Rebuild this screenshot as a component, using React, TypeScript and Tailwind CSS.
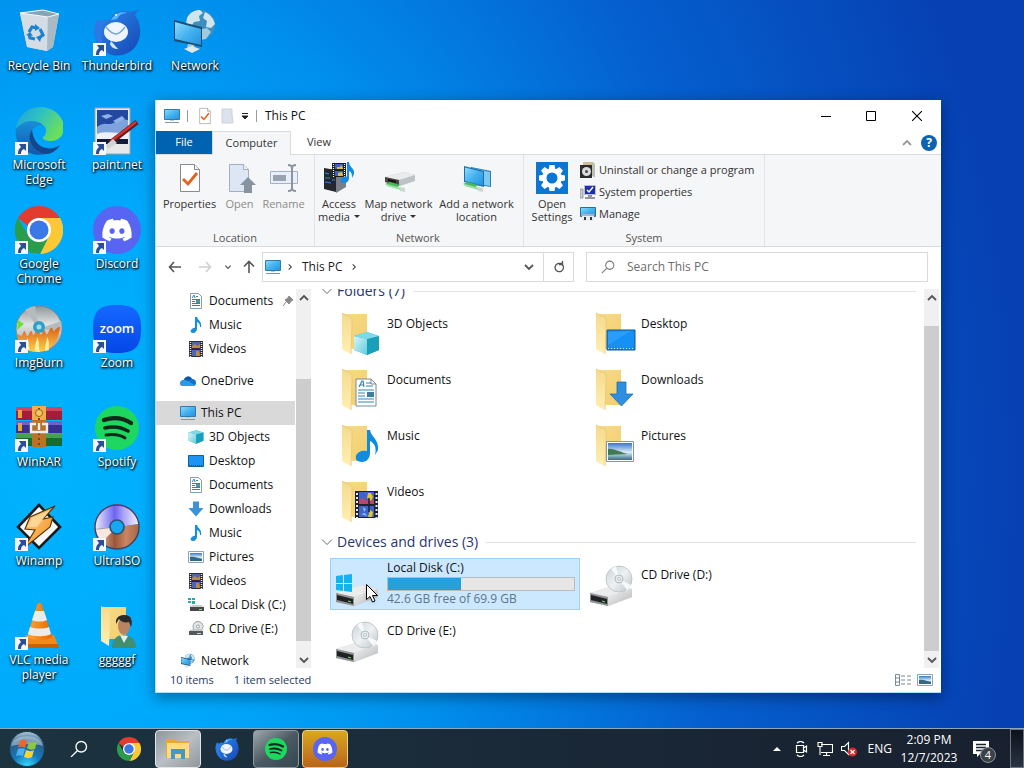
import React from 'react';
import { FaDiscord } from 'react-icons/fa6';

type IconProps = { className?: string };
type IconType = React.FC<IconProps>;

/* Gradients shared by all icons */
const Gradients = () => (
  <svg className="absolute w-0 h-0" aria-hidden="true">
    <defs>
      <linearGradient id="screen" x1="0" y1="0" x2="1" y2="1">
        <stop offset="0" stopColor="#8fdcfb" />
        <stop offset="0.5" stopColor="#45b2f0" />
        <stop offset="1" stopColor="#2292e0" />
      </linearGradient>
      <linearGradient id="folder" x1="0" y1="0" x2="1" y2="1">
        <stop offset="0" stopColor="#f7dc8a" />
        <stop offset="1" stopColor="#f3cd6c" />
      </linearGradient>
      <linearGradient id="folderFront" x1="0" y1="0" x2="0" y2="1">
        <stop offset="0" stopColor="#f6da8c" />
        <stop offset="1" stopColor="#ffefb4" />
      </linearGradient>
      <linearGradient id="metal" x1="0" y1="0" x2="1" y2="1">
        <stop offset="0" stopColor="#f5f5f5" />
        <stop offset="1" stopColor="#b4b6b8" />
      </linearGradient>
      <linearGradient id="silverDisc" x1="0" y1="0" x2="1" y2="1">
        <stop offset="0" stopColor="#c9d2d6" />
        <stop offset="0.5" stopColor="#eef1f2" />
        <stop offset="1" stopColor="#b8c3c8" />
      </linearGradient>
      <linearGradient id="burnDisc" x1="0" y1="0" x2="0" y2="1">
        <stop offset="0" stopColor="#8f9599" />
        <stop offset="0.4" stopColor="#dfe2e4" />
        <stop offset="1" stopColor="#8f9599" />
      </linearGradient>
      <linearGradient id="edgeGreen" x1="0" y1="0" x2="1" y2="0.5">
        <stop offset="0" stopColor="#1c9fdc" />
        <stop offset="0.5" stopColor="#2fc2c0" />
        <stop offset="1" stopColor="#6cdf5a" />
      </linearGradient>
      <linearGradient id="edgeBlue" x1="0" y1="0" x2="0" y2="1">
        <stop offset="0" stopColor="#1a8fd8" />
        <stop offset="1" stopColor="#1159a8" />
      </linearGradient>
      <linearGradient id="bird" x1="0" y1="0" x2="1" y2="1">
        <stop offset="0" stopColor="#2a8df0" />
        <stop offset="1" stopColor="#1546b4" />
      </linearGradient>
      <linearGradient id="sky" x1="0" y1="0" x2="0" y2="1">
        <stop offset="0" stopColor="#3a78c4" />
        <stop offset="0.55" stopColor="#dcecf6" />
        <stop offset="1" stopColor="#2d6d8f" />
      </linearGradient>
      <linearGradient id="flame" x1="0" y1="0" x2="0" y2="1">
        <stop offset="0" stopColor="#d9601a" />
        <stop offset="1" stopColor="#ffd24a" />
      </linearGradient>
      <linearGradient id="cone" x1="0" y1="0" x2="1" y2="0">
        <stop offset="0" stopColor="#ffa63c" />
        <stop offset="1" stopColor="#e06a00" />
      </linearGradient>
      <linearGradient id="bolt" x1="0" y1="0" x2="1" y2="1">
        <stop offset="0" stopColor="#ffd48a" />
        <stop offset="1" stopColor="#f08a1c" />
      </linearGradient>
      <linearGradient id="cubeLeft" x1="0" y1="0" x2="1" y2="1">
        <stop offset="0" stopColor="#d9f5f9" />
        <stop offset="1" stopColor="#5fcbdc" />
      </linearGradient>
      <radialGradient id="orb" cx="0.5" cy="1" r="1">
        <stop offset="0" stopColor="#37e0ff" />
        <stop offset="0.4" stopColor="#1479bd" />
        <stop offset="0.75" stopColor="#2b5d86" />
        <stop offset="1" stopColor="#b8d3e4" />
      </radialGradient>
      <linearGradient id="zoomBg" x1="0" y1="0" x2="0" y2="1">
        <stop offset="0" stopColor="#1568ff" />
        <stop offset="1" stopColor="#0547e8" />
      </linearGradient>
      <linearGradient id="isoTop" x1="0" y1="0" x2="1" y2="0">
        <stop offset="0" stopColor="#f0f0fb" />
        <stop offset="0.45" stopColor="#6d63f2" />
        <stop offset="0.65" stopColor="#a9a4f7" />
        <stop offset="1" stopColor="#f4f4fd" />
      </linearGradient>
      <linearGradient id="isoBottom" x1="0" y1="0" x2="1" y2="0">
        <stop offset="0" stopColor="#eccab4" />
        <stop offset="0.45" stopColor="#9a5636" />
        <stop offset="0.7" stopColor="#c98663" />
        <stop offset="1" stopColor="#a76544" />
      </linearGradient>
    </defs>
  </svg>
);

/* Desktop icons, all on a 48 unit canvas */
const Shortcut = () => (
  <g>
    <rect x="0" y="35" width="13" height="13" fill="#f4f7fb" />
    <path d="M4 37h7v7l-2-2c-2 1-3 2-3 5H3c0-4 1-5 3-7z" fill="#2a4f96" />
  </g>
);

const RecycleBin: IconType = ({ className }) => (
  <svg viewBox="0 0 48 48" className={className}>
    <path d="M5 5l7 34 20 4 6-4 6-33-16-4z" fill="#c8d6de" />
    <path d="M5 5l7 34 20 4 1-36z" fill="#d3dde3" />
    <path d="M33 7l11-1-6 33-6 4z" fill="#a9bac4" />
    <path d="M5 5l23-3 16 4-11 3z" fill="#8ba2b0" stroke="#f2f7f9" strokeWidth="1" />
    <g fill="none" stroke="#1d82d2" strokeWidth="3.2">
      <path d="M14 24l3-5 5 1" />
      <path d="M25 21l3 6-4 3" />
      <path d="M20 31l-5-1-1-4" />
    </g>
    <path d="M20 16l5 4-5 3zM27 27l-6 2 4 5zM11 27l4-3 3 4z" fill="#1d82d2" />
  </svg>
);

const BirdArt = () => (
  <g>
    <path d="M17 12C20 3 31 1 37 4l8-2-3 5c6 8 7 20 2 29-5 9-15 13-25 11C8 44 1 33 1 22c0-5 1-9 4-12l1 6c2-4 6-6 11-4z" fill="url(#bird)" />
    <path d="M5 12C-1 24 3 38 15 45 7 35 7 26 11 15z" fill="#2f79e2" />
    <path d="M18 12c4-7 11-9 17-7-6 0-9 2-11 6z" fill="#5ab6ff" />
    <ellipse cx="23" cy="24" rx="12" ry="10" fill="#eef5fc" />
    <path d="M13 19c4 5 7 7 10 7s6-3 9-7" fill="none" stroke="#7aa6d4" strokeWidth="1.4" />
    <path d="M18 33l7 8c-4 0-7-2-8-5z" fill="#d4e6f8" />
    <circle cx="23" cy="7" r="1" fill="#fff" />
  </g>
);

const Thunderbird: IconType = ({ className }) => (
  <svg viewBox="0 0 48 48" className={className}><BirdArt /><Shortcut /></svg>
);

const ThunderbirdSmall: IconType = ({ className }) => (
  <svg viewBox="0 0 48 48" className={className}><BirdArt /></svg>
);

const NetworkIcon: IconType = ({ className }) => (
  <svg viewBox="0 0 48 48" className={className}>
    <circle cx="29" cy="17" r="15" fill="#3c8fc0" />
    <path d="M16 10c3-6 8-8 13-8l3 3-4 3 1 5-6 1-3 5-5-2zM34 4c5 2 9 7 10 12l-4 4-5-1 1-6-4-3z" fill="#cfe6ee" />
    <path d="M28 22l8-2 4 4-5 7-6 1z" fill="#9fcbdc" />
    <path d="M3 12l28 7v20L3 33z" fill="#1c4d74" />
    <path d="M4 14l26 7v16L4 31z" fill="url(#screen)" />
    <path d="M17 36l6 1 1 4-8-1z" fill="#b7c4cc" />
    <path d="M13 41l8-3 8 3-8 4z" fill="#dfe7eb" />
  </svg>
);

const Edge: IconType = ({ className }) => (
  <svg viewBox="0 0 48 48" className={className}>
    <path d="M1 22C6 13 20 11 28 18c-8-1-14 6-12 14 2 9 11 14 19 14C18 52-2 42 1 22z" fill="url(#edgeBlue)" />
    <path d="M1 22C3 9 12 0 25 0c14 0 24 10 24 21 0 8-6 13-13 13-6 0-9-2-8-4 4-3 4-8 1-11C23 12 8 12 1 22z" fill="url(#edgeGreen)" />
    <path d="M17 23c-6 8 0 22 15 24 6-1 10-4 13-9-4 3-9 4-14 3-8-1-13-9-14-18z" fill="#15468c" />
    <Shortcut />
  </svg>
);

const PaintNet: IconType = ({ className }) => (
  <svg viewBox="0 0 48 48" className={className}>
    <path d="M2 1h35v46H2z" fill="#e6e8ea" stroke="#9aa4ac" strokeWidth="1" />
    <path d="M4 3h31v34H4z" fill="#2248a0" />
    <path d="M4 20c8-7 12 0 18-5s9-2 13-2v16H4z" fill="#7ea3dc" />
    <path d="M4 27c10-4 20 1 31-3v8H4z" fill="#eaf1fb" />
    <path d="M8 9l7-2 5 2-7 3zM20 14l9-5 3 3-8 4z" fill="#90b0e8" />
    <path d="M4 32h31v5H4z" fill="#121b38" />
    <path d="M44 15L17 36" stroke="#651b1e" strokeWidth="5" />
    <path d="M43 15L18 34" stroke="#d33434" strokeWidth="2.4" />
    <path d="M20 32l4 4-9 6-2-4z" fill="#cfd3d7" />
    <Shortcut />
  </svg>
);

const ChromeArt = () => (
  <g>
    <path d="M24 0a24 24 0 0 1 21 12H24A12 12 0 0 0 13 20L3 12A24 24 0 0 1 24 0z" fill="#e33b2e" />
    <path d="M3 12l11 19c2 4 6 5 10 5l-5 11.500A24 24 0 0 1 3 12z" fill="#2a9c4a" />
    <path d="M24 12h21a24 24 0 0 1-20 36l9-18z" fill="#fcc934" />
    <path d="M20 34l12 0-7 14-6-1z" fill="#2a9c4a" />
    <circle cx="24" cy="24" r="12" fill="#fff" />
    <circle cx="24" cy="24" r="9.500" fill="#3b78e7" />
  </g>
);

const Chrome: IconType = ({ className }) => (
  <svg viewBox="0 0 48 48" className={className}><ChromeArt /><Shortcut /></svg>
);

const ChromeSmall: IconType = ({ className }) => (
  <svg viewBox="0 0 48 48" className={className}><ChromeArt /></svg>
);

const DiscordArt = () => (
  <g>
    <circle cx="24" cy="24" r="24" fill="#5865f2" />
    <FaDiscord x="8" y="8" size={32} color="#fff" />
  </g>
);

const Discord: IconType = ({ className }) => (
  <svg viewBox="0 0 48 48" className={className}><DiscordArt /><Shortcut /></svg>
);

const DiscordSmall: IconType = ({ className }) => (
  <svg viewBox="0 0 48 48" className={className}><DiscordArt /></svg>
);

const ImgBurn: IconType = ({ className }) => (
  <svg viewBox="0 0 48 48" className={className}>
    <circle cx="24" cy="24" r="23" fill="url(#burnDisc)" stroke="#80878c" strokeWidth="1" />
    <path d="M24 24L10 5a23 23 0 0 1 10-4zM24 24l22-8c1 4 1 7 0 10z" fill="#b5babd" />
    <path d="M3 15l6 4-7 6z" fill="#6be03a" />
    <path d="M2 30c3-2 3 3 5 0s2-7 4-1 3-2 5-3 1 8 4 2 3-3 5 1 3-8 5-3 2 4 4 0 3-4 4-1 3-3 7-3c-1 14-9 24-21 25C12 48 3 40 2 30z" fill="url(#flame)" />
    <path d="M10 44c0-6 2-6 2-11 3 4 1 8 3 12zM20 46c-1-7 2-8 2-14 3 6 1 9 3 15zM30 46c0-7 2-9 2-14 3 5 1 9 2 13z" fill="#fff0a0" />
    <circle cx="24" cy="22" r="6" fill="#2f9fc4" />
    <circle cx="24" cy="22" r="2.500" fill="#9fdcee" />
    <Shortcut />
  </svg>
);

const Zoom: IconType = ({ className }) => (
  <svg viewBox="0 0 48 48" className={className}>
    <path d="M24 0c18 0 24 6 24 24s-6 24-24 24S0 42 0 24 6 0 24 0z" fill="url(#zoomBg)" />
    <text x="24" y="28" textAnchor="middle" fontSize="13" fontWeight="600" fill="#fff" fontFamily="Open Sans, sans-serif">zoom</text>
    <Shortcut />
  </svg>
);

const WinRAR: IconType = ({ className }) => (
  <svg viewBox="0 0 48 48" className={className}>
    <path d="M1 3h46v13H1z" fill="#a51c38" />
    <path d="M1 3h46v4H1z" fill="#cf4661" />
    <path d="M1 17h46v12H1z" fill="#3a2f8c" />
    <path d="M1 17h46v4H1z" fill="#6c62c8" />
    <path d="M1 30h46v12H1z" fill="#1d6b2c" />
    <path d="M1 30h46v4H1z" fill="#45a050" />
    <path d="M3 6h4v8H3zM3 19h4v8H3z" fill="#e8a53a" />
    <path d="M17 2h14v41H17z" fill="#b9722a" />
    <path d="M17 2h14v14H17z" fill="#efae4c" />
    <path d="M24 4v38" stroke="#7d4512" strokeWidth="2" strokeDasharray="2 3" />
    <circle cx="24" cy="9" r="3.500" fill="#f6c768" stroke="#98601c" strokeWidth="1" />
    <path d="M21 20h-5v8h16v-8h-5M24 19v7" fill="none" stroke="#eceff1" strokeWidth="2.400" />
    <Shortcut />
  </svg>
);

const SpotifyArt = () => (
  <g>
    <circle cx="24" cy="24" r="22" fill="#1ed760" />
    <g fill="none" stroke="#10281a" strokeLinecap="round">
      <path d="M11 16c9-3 19-2 27 3" strokeWidth="4.400" />
      <path d="M12 24c8-2 16-1 23 3" strokeWidth="3.600" />
      <path d="M13 31c7-1 13-1 19 3" strokeWidth="3" />
    </g>
  </g>
);

const Spotify: IconType = ({ className }) => (
  <svg viewBox="0 0 48 48" className={className}><SpotifyArt /><Shortcut /></svg>
);

const SpotifySmall: IconType = ({ className }) => (
  <svg viewBox="0 0 48 48" className={className}><SpotifyArt /></svg>
);

const Winamp: IconType = ({ className }) => (
  <svg viewBox="0 0 48 48" className={className}>
    <path d="M24 2l21 22-21 21L3 24z" fill="#f7f7f7" stroke="#1a1a1a" strokeWidth="2.600" />
    <path d="M40 3L15 14 10 26l10 1L9 45l26-21 3-10-10 2z" fill="url(#bolt)" stroke="#5a3608" strokeWidth="1.200" />
    <path d="M35 7L17 15l-4 9h9z" fill="#ffe2ae" opacity="0.700" />
    <Shortcut />
  </svg>
);

const UltraISO: IconType = ({ className }) => (
  <svg viewBox="0 0 48 48" className={className}>
    <path d="M2 26A22 22 0 1 1 46 21L24 24z" fill="url(#isoTop)" />
    <path d="M46 21A22 22 0 1 1 2 26l22-2z" fill="url(#isoBottom)" />
    <path d="M24 24L3 27a22 22 0 0 0 6 12z" fill="#f6e8de" />
    <circle cx="24" cy="24" r="22" fill="none" stroke="#4b3d5c" strokeWidth="1.400" />
    <circle cx="24" cy="24" r="7" fill="#14a8f5" stroke="#32506e" strokeWidth="1.600" />
    <Shortcut />
  </svg>
);

const Vlc: IconType = ({ className }) => (
  <svg viewBox="0 0 48 48" className={className}>
    <path d="M11 33h28l5 13H4z" fill="#f28a1a" />
    <path d="M4 46l2-4h37l1 4z" fill="#c96204" />
    <path d="M22 3c1-3 4-3 5 0l10 32c-5 4-20 4-25 0z" fill="url(#cone)" />
    <path d="M20 9h9l3 9c-4 2-11 2-15 0z" fill="#e9ebec" />
    <path d="M15 25c5 2 14 2 19 0l2 7c-5 3-18 3-23 0z" fill="#e9ebec" />
    <Shortcut />
  </svg>
);

const FolderArt = () => (
  <g>
    <path d="M9 5h24v35l-14 0-10-4z" fill="url(#folder)" />
    <path d="M8 4l10 5v9l-1 27-8-4c-1-1-1-1-1-3z" fill="url(#folderFront)" />
    <path d="M8 4l10 5v9l-1 27" fill="none" stroke="#e9c66c" strokeWidth="0.800" />
  </g>
);

const UserFolder: IconType = ({ className }) => (
  <svg viewBox="0 0 48 48" className={className}>
    <path d="M9 5h24v32H9z" fill="url(#folder)" />
    <path d="M8 4l9 5v9l-1 26-8-5z" fill="url(#folderFront)" />
    <path d="M19 46c0-9 5-13 11-13s13 3 13 13z" fill="#3f8f70" />
    <path d="M27 33l4 8 4-7z" fill="#e3efe8" />
    <ellipse cx="31" cy="24" rx="6" ry="9" fill="#b98460" />
    <path d="M23 22c-1-8 5-9 9-9 6 0 8 5 6 12l-2-5c-4 1-8 0-10-3z" fill="#2c2b2a" />
  </svg>
);

/* Folder overlays */
const CubeArt = () => (
  <g>
    <path d="M20 27l13-4 12 4v14l-12 5-13-5z" fill="#2fb4cd" />
    <path d="M20 27l13 3v16l-13-5z" fill="url(#cubeLeft)" />
    <path d="M33 30l12-3v14l-12 5z" fill="#1a9fbb" />
    <path d="M20 27l13-4 12 4-12 3z" fill="#7ddbe8" />
  </g>
);

const DocArt = () => (
  <g>
    <path d="M22 14h15l5 5v22H22z" fill="#fff" stroke="#7b8a94" strokeWidth="1" />
    <path d="M37 14v5h5" fill="none" stroke="#7b8a94" strokeWidth="1" />
    <path d="M25 22l3-6h1l1 6M26 20h4M32 18h5M32 21h7M24 25h16M24 28h7M24 31h7M24 34h16M24 37h16" fill="none" stroke="#2b87b8" strokeWidth="1.200" />
    <path d="M33 27h7v5h-7z" fill="#3e7d9d" />
  </g>
);

const NoteArt = () => (
  <path d="M33 9h3c1 7 9 9 8 20l-3 5c2-8-1-12-5-14v12c0 6-4 9-8 9-5 0-7-3-6-6 1-4 6-6 11-5z" fill="#0f8ce0" />
);

const FilmArt = () => (
  <g>
    <path d="M21 14h23v27H21z" fill="#1d2230" />
    <path d="M23 16v25M42.500 16v25" stroke="#e4e8ee" strokeWidth="2" strokeDasharray="2 2" />
    <path d="M25 15h15v12H25zM25 29h15v11H25z" fill="#3f63c8" />
    <path d="M25 23l4-2 4 3 3-3 4 3v3H25z" fill="#b8486a" />
    <path d="M34 16h3l2 4-2 4-4-3zM36 33l3 2-1 5h-4z" fill="#e5c62a" />
    <path d="M29 30l3 2-2 3zM27 37l4-1 2 3z" fill="#83c4f0" />
    <path d="M35 21v14" stroke="#1d2230" strokeWidth="1.500" />
  </g>
);

const ScreenArt = () => (
  <g>
    <path d="M19 21h28v20H19z" fill="#1590f5" stroke="#12578c" strokeWidth="1" />
    <path d="M20 23l23-1-23 14z" fill="#2a9dfb" />
    <path d="M20 39.500h26" stroke="#d7ecfc" strokeWidth="1" strokeDasharray="1 2" />
  </g>
);

const ArrowArt = () => (
  <path d="M29 17h9v12h7L33.500 41 22 29h7z" fill="#2e8fe0" stroke="#1f6fb5" strokeWidth="0.800" />
);

const PhotoArt = () => (
  <g>
    <path d="M18.500 20.500h27v20h-27z" fill="#fff" stroke="#7d97a8" strokeWidth="1" />
    <path d="M20 22h24v17H20z" fill="url(#sky)" />
    <path d="M20 28c6-1 13 4 20 5l-20 1z" fill="#3f7a52" />
  </g>
);

const withFolder = (Art: React.FC): IconType => ({ className }) => (
  <svg viewBox="0 0 48 48" className={className}><FolderArt /><Art /></svg>
);

const DriveArt = () => (
  <g>
    <path d="M2 33l26-8 16 4v8L20 46 2 42z" fill="#c9cbcd" />
    <path d="M2 33l26-8 16 4-24 8z" fill="#ececec" />
    <path d="M20 37l24-8v8L20 46z" fill="url(#metal)" />
    <path d="M2 33l18 4v9L2 42z" fill="#8f9294" />
    <path d="M3 35l16 4v5L3 40z" fill="#1f2122" />
    <path d="M14 41l3 1" stroke="#7fe070" strokeWidth="1" />
  </g>
);

const LocalDisk: IconType = ({ className }) => (
  <svg viewBox="0 0 48 48" className={className}>
    <DriveArt />
    <path d="M2 16l7-1v8H2zM10 15l8-1v9h-8zM2 24h7v7l-7-1zM10 24h8v8l-8-1z" fill="#12b5ee" />
  </svg>
);

const CdDrive: IconType = ({ className }) => (
  <svg viewBox="0 0 48 48" className={className}>
    <DriveArt />
    <circle cx="31" cy="19" r="13" fill="url(#silverDisc)" stroke="#b5bfc3" strokeWidth="0.800" />
    <path d="M31 19l8 11 4-5zM31 19L23 9l5-3z" fill="#f7f9fa" />
    <circle cx="31" cy="19" r="4" fill="#e8eef0" stroke="#a3b0b5" strokeWidth="0.800" />
    <circle cx="31" cy="19" r="1.500" fill="#fff" stroke="#a3b0b5" strokeWidth="0.800" />
  </svg>
);

/* 16px icons */
const PcSmall: IconType = ({ className }) => (
  <svg viewBox="0 0 16 16" className={className}>
    <path d="M0.500 1.500h15v10h-15z" fill="url(#screen)" stroke="#2f7cab" strokeWidth="1" />
    <path d="M1 14.500h14" stroke="#7e96a5" strokeWidth="1" />
    <path d="M6 12h4v1H6z" fill="#b9cbd6" />
  </svg>
);

const SheetSmall: IconType = ({ className }) => (
  <svg viewBox="0 0 16 16" className={className}>
    <path d="M2.500 0.500h8l3 3v12h-11z" fill="#fff" stroke="#8d9ba4" strokeWidth="1" />
    <path d="M4 5l2-3 1 3M8 3.500h2M4 6.500h8M4 8.500h3M8 9.500h4M4 10.500h8M4 12.500h8" fill="none" stroke="#2b87a8" strokeWidth="1" />
    <path d="M8 7h4v3H8z" fill="#4c8fae" />
  </svg>
);

const NoteSmall: IconType = ({ className }) => (
  <svg viewBox="0 0 16 16" className={className}>
    <path d="M7 0h2c1 4 5 4 4 10h-1c0-3-1-4-3-5v7c0 2-2 4-4 4s-3-2-2-3 3-3 4-2z" fill="#168ee0" />
  </svg>
);

const FilmSmall: IconType = ({ className }) => (
  <svg viewBox="0 0 16 16" className={className}>
    <path d="M1 0h14v16H1z" fill="#2b2d34" />
    <path d="M2.500 1v15M13.500 1v15" stroke="#e2e4e8" strokeWidth="1.500" strokeDasharray="1 1" />
    <path d="M4 1h8v6H4zM4 9h8v6H4z" fill="#4a66b8" />
    <path d="M4 5l3-2 2 2 3-2v4H4zM8 10h3l1 5H8z" fill="#c08a3a" />
  </svg>
);

const CloudSmall: IconType = ({ className }) => (
  <svg viewBox="0 0 16 16" className={className}>
    <path d="M4 7c1-4 6-5 8-1 3 0 4 2 4 4s-1 3-3 3H3c-4 0-4-6 1-6z" fill="#1373c8" />
    <path d="M4 7c3-1 5 1 7 3l4 2c-1 1-1 1-2 1H3c-4 0-4-5 1-6z" fill="#2b9be8" />
    <path d="M4 7c1-4 6-5 8-1-2 0-3 1-4 2-1-1-3-1-4-1z" fill="#0b5aa8" />
  </svg>
);

const CubeSmall: IconType = ({ className }) => (
  <svg viewBox="19 22 27 25" className={className}><CubeArt /></svg>
);

const DesktopSmall: IconType = ({ className }) => (
  <svg viewBox="0 0 16 16" className={className}>
    <path d="M0.500 2.500h15v11h-15z" fill="#1b94f5" stroke="#14609c" strokeWidth="1" />
    <path d="M1 12.500h14" stroke="#1e4e78" strokeWidth="1" strokeDasharray="1 1" />
  </svg>
);

const DownSmall: IconType = ({ className }) => (
  <svg viewBox="0 0 16 16" className={className}>
    <path d="M5 0.500h6V7h4.500L8 15.500 0.500 7H5z" fill="#3a92d8" />
  </svg>
);

const PhotoSmall: IconType = ({ className }) => (
  <svg viewBox="0 0 16 16" className={className}>
    <path d="M0.500 2.500h15v11h-15z" fill="#fff" stroke="#8fa5b3" strokeWidth="1" />
    <path d="M2 4h12v8H2z" fill="url(#sky)" />
    <path d="M2 8c4-1 7 1 12 2v2H2z" fill="#2f6a86" />
  </svg>
);

const DiskSmall: IconType = ({ className }) => (
  <svg viewBox="0 0 16 16" className={className}>
    <path d="M2 9l3-1h8l3 2H2z" fill="#c9cdcf" />
    <path d="M2 10h14v4H2z" fill="#45494c" />
    <path d="M11 12h3v1h-3z" fill="#8fe080" />
    <path d="M0 1h3v2H0zM4 1h3v2H4zM0 4h3v2H0zM4 4h3v3H4z" fill="#1cb0a8" />
  </svg>
);

const CdSmall: IconType = ({ className }) => (
  <svg viewBox="0 0 16 16" className={className}>
    <circle cx="10" cy="5.500" r="5" fill="#e3e6e8" stroke="#989ea2" strokeWidth="1" />
    <circle cx="10" cy="5.500" r="1.500" fill="#fff" stroke="#989ea2" strokeWidth="1" />
    <path d="M2 9l3-1h8l2 2H2z" fill="#c4c8ca" />
    <path d="M1 10h14v4H1z" fill="#55595c" />
    <path d="M9 12h4v1H9z" fill="#d6d6d6" />
  </svg>
);

/* Ribbon icons */
const CheckSheet: IconType = ({ className }) => (
  <svg viewBox="0 0 32 32" className={className}>
    <path d="M6.500 2.500h14l5 5v22h-19z" fill="#fff" stroke="#8a8a8a" strokeWidth="1" />
    <path d="M20.500 2.500v5h5" fill="#eee" stroke="#8a8a8a" strokeWidth="1" />
    <path d="M9 17l5 5 9-11" fill="none" stroke="#e5601c" strokeWidth="2.800" />
  </svg>
);

const OpenSheet: IconType = ({ className }) => (
  <svg viewBox="0 0 32 32" className={className}>
    <path d="M5.500 2.500h14l5 5v22h-19z" fill="#dde6f4" stroke="#a3afbf" strokeWidth="1" />
    <path d="M19.500 2.500v5h5" fill="#eef2f9" stroke="#a3afbf" strokeWidth="1" />
    <path d="M24 15l8 8h-4v8h-8v-8h-4z" fill="#8893a2" />
  </svg>
);

const Rename: IconType = ({ className }) => (
  <svg viewBox="0 0 32 32" className={className}>
    <path d="M2.500 9.500h27v12h-27z" fill="#e9eff8" stroke="#a4b2c4" strokeWidth="1" />
    <path d="M5 13h13v6H5z" fill="#98a3b2" />
    <path d="M20 3c3 0 4 1 4 3 0-2 1-3 4-3M24 6v20M20 29c3 0 4-1 4-3 0 2 1 3 4 3" fill="none" stroke="#8b95a2" strokeWidth="2" />
  </svg>
);

const AccessMedia: IconType = ({ className }) => (
  <svg viewBox="0 0 32 32" className={className}>
    <path d="M1 6l12 2v22L1 27z" fill="#24272c" />
    <path d="M13 8l10-3v20l-10 6z" fill="#7b8088" />
    <path d="M2 11l4 1M2 16h5M2 20l6 1M9 14h3M9 18h3" stroke="#2f86e8" strokeWidth="1.200" />
    <path d="M9 1h14v14H9z" fill="#1c1c1c" />
    <path d="M10.500 2v13M21.500 2v13" stroke="#f2f2f2" strokeWidth="1.200" strokeDasharray="1 1" />
    <path d="M12 2h8v5h-8zM12 9h8v5h-8z" fill="#3d62c4" />
    <path d="M14 5h3l1-2 2 3v1h-6zM15 11l4-1 1 4h-5z" fill="#dcc233" />
    <path d="M24 0h2c0 5 6 6 5 12l-2 4c0-5-1-6-3-7v7c0 4-3 5-5 5-3 0-4-2-3-4s4-3 6-2z" fill="#138be2" />
  </svg>
);

const CableArt = () => (
  <g>
    <path d="M2 22l5-2 10 3-4 3z" fill="#49b85c" />
    <path d="M4 23l14 4" stroke="#8fe09a" strokeWidth="2" />
    <path d="M17 25l5 1v4l-5-1z" fill="#cfd4d6" />
  </g>
);

const MapDrive: IconType = ({ className }) => (
  <svg viewBox="0 0 32 32" className={className}>
    <path d="M2 15l19-5 11 3v6l-15 5-15-4z" fill="#bfc2c4" />
    <path d="M2 15l19-5 11 3-16 5z" fill="#eaebec" />
    <path d="M2 15l14 3v6L2 20z" fill="#4a4442" />
    <path d="M5 18l8 2" stroke="#17110f" strokeWidth="2" />
    <CableArt />
  </svg>
);

const AddLocation: IconType = ({ className }) => (
  <svg viewBox="0 0 32 32" className={className}>
    <path d="M10 5l20 4v16l-20-3z" fill="#2a7fb8" />
    <path d="M11 6l18 4v14l-18-3z" fill="#7fc8ef" />
    <path d="M3 4l20 5v16L3 20z" fill="#1d6fa8" />
    <path d="M4 5.500l18 4.500v13.500L4 19z" fill="url(#screen)" />
    <CableArt />
  </svg>
);

const gearTeeth = [0, 45, 90, 135, 180, 225, 270, 315];

const Settings: IconType = ({ className }) => (
  <svg viewBox="0 0 32 32" className={className}>
    <path d="M0 0h32v32H0z" fill="#0b76d4" />
    <circle cx="16" cy="16" r="7.500" fill="none" stroke="#fff" strokeWidth="4" />
    {gearTeeth.map(angle => (
      <path key={angle} d="M13.500 3h5l1 5h-7z" fill="#fff" transform={`rotate(${angle} 16 16)`} />
    ))}
    <circle cx="16" cy="16" r="5" fill="#0b76d4" />
  </svg>
);

const Uninstall: IconType = ({ className }) => (
  <svg viewBox="0 0 16 16" className={className}>
    <path d="M3 0h10l2 2v12H3z" fill="#cbbf9a" />
    <path d="M13 2h2v13h-2z" fill="#b8bcc4" />
    <path d="M0 3h12v13H0z" fill="#2c2c2c" />
    <circle cx="6.500" cy="9.500" r="4.500" fill="#d9dcde" />
    <circle cx="6.500" cy="9.500" r="1.500" fill="#4a4a4a" />
  </svg>
);

const SystemProps: IconType = ({ className }) => (
  <svg viewBox="0 0 16 16" className={className}>
    <path d="M0 5h3v9H0z" fill="#c9ccd0" stroke="#8c8f94" strokeWidth="0.800" />
    <path d="M4 1h12v10H4z" fill="#b9bec8" />
    <path d="M5 2h10v8H5z" fill="#1e2fa8" />
    <path d="M7 6l2 2 4-5" fill="none" stroke="#fff" strokeWidth="1.500" />
    <path d="M8 11h4v2H8zM5 13h10v2H5z" fill="#9196a0" />
  </svg>
);

const Manage: IconType = ({ className }) => (
  <svg viewBox="0 0 16 16" className={className}>
    <path d="M0.500 1.500h15v9h-15z" fill="url(#screen)" stroke="#2c6f96" strokeWidth="1" />
    <path d="M2 8h12v7H2z" fill="#e9edf0" />
    <path d="M2 8h12v2H2z" fill="#a9b6be" />
    <path d="M4 11h2v3H4zM10 11h2v3h-2z" fill="#33383c" />
  </svg>
);

/* Chevrons and arrows */
const Chevron: React.FC<{ dir: 'up' | 'down' | 'right'; thin?: boolean; className?: string }> = ({ dir, thin, className }) => {
  const paths = { up: 'M2 8l4-4 4 4', down: 'M2 4l4 4 4-4', right: 'M4 2l4 4-4 4' };
  const thinDown = 'M1 3.500l5 5 5-5';
  return (
    <svg viewBox="0 0 12 12" className={className}>
      <path d={thin ? thinDown : paths[dir]} fill="none" stroke="currentColor" strokeWidth={thin ? 1 : 1.8} />
    </svg>
  );
};

const LongArrow: React.FC<{ d: string; className?: string }> = ({ d, className }) => (
  <svg viewBox="0 0 14 14" className={className}>
    <path d={d} fill="none" stroke="currentColor" strokeWidth="1.600" />
  </svg>
);

const Magnifier: IconType = ({ className }) => (
  <svg viewBox="0 0 16 16" className={className}>
    <circle cx="10" cy="6" r="4.700" fill="none" stroke="currentColor" strokeWidth="1.200" />
    <path d="M6.500 9.500L1 15" stroke="currentColor" strokeWidth="1.200" />
  </svg>
);

const ThumbsView: IconType = ({ className }) => (
  <svg viewBox="0 0 16 12" className={className}>
    <path d="M0.500 0.500h4v11h-4zM0.500 4h4M0.500 8h4" fill="none" stroke="#7a8894" strokeWidth="1" />
    <path d="M6 2h4M12 2h4M6 6h4M12 6h4M6 10h4M12 10h4" stroke="#7a8894" strokeWidth="1" />
  </svg>
);

const desktopColumns: { name: string; icon: IconType }[][] = [
  [
    { name: 'Recycle Bin', icon: RecycleBin },
    { name: 'Microsoft Edge', icon: Edge },
    { name: 'Google Chrome', icon: Chrome },
    { name: 'ImgBurn', icon: ImgBurn },
    { name: 'WinRAR', icon: WinRAR },
    { name: 'Winamp', icon: Winamp },
    { name: 'VLC media player', icon: Vlc },
  ],
  [
    { name: 'Thunderbird', icon: Thunderbird },
    { name: 'paint.net', icon: PaintNet },
    { name: 'Discord', icon: Discord },
    { name: 'Zoom', icon: Zoom },
    { name: 'Spotify', icon: Spotify },
    { name: 'UltraISO', icon: UltraISO },
    { name: 'gggggf', icon: UserFolder },
  ],
  [{ name: 'Network', icon: NetworkIcon }],
];

const treeGroups: { name: string; icon: IconType; root?: boolean; active?: boolean; pinned?: boolean }[][] = [
  [
    { name: 'Documents', icon: SheetSmall, pinned: true },
    { name: 'Music', icon: NoteSmall },
    { name: 'Videos', icon: FilmSmall },
  ],
  [{ name: 'OneDrive', icon: CloudSmall, root: true }],
  [
    { name: 'This PC', icon: PcSmall, root: true, active: true },
    { name: '3D Objects', icon: CubeSmall },
    { name: 'Desktop', icon: DesktopSmall },
    { name: 'Documents', icon: SheetSmall },
    { name: 'Downloads', icon: DownSmall },
    { name: 'Music', icon: NoteSmall },
    { name: 'Pictures', icon: PhotoSmall },
    { name: 'Videos', icon: FilmSmall },
    { name: 'Local Disk (C:)', icon: DiskSmall },
    { name: 'CD Drive (E:)', icon: CdSmall },
  ],
  [{ name: 'Network', icon: NetworkIcon, root: true }],
];

const folders: { name: string; icon: IconType }[] = [
  { name: '3D Objects', icon: withFolder(CubeArt) },
  { name: 'Desktop', icon: withFolder(ScreenArt) },
  { name: 'Documents', icon: withFolder(DocArt) },
  { name: 'Downloads', icon: withFolder(ArrowArt) },
  { name: 'Music', icon: withFolder(NoteArt) },
  { name: 'Pictures', icon: withFolder(PhotoArt) },
  { name: 'Videos', icon: withFolder(FilmArt) },
];

const drive = { total: 69.9, free: 42.6 };

const Caret = () => (
  <svg viewBox="0 0 6 3" className="w-[6px] h-[3px]"><path d="M0 0h6L3 3z" fill="currentColor" /></svg>
);

const RibbonButton: React.FC<{
  icon: IconType;
  lines: string[];
  className: string;
  menu?: boolean;
  disabled?: boolean;
}> = ({ icon: Icon, lines, className, menu, disabled }) => (
  <button
    disabled={disabled}
    className={`${className} pt-[3px] flex flex-col items-center leading-[13px] whitespace-nowrap disabled:text-[#8b8b8b]`}
  >
    <Icon className="w-8 h-8 mb-[3px]" />
    {lines.map((line, i) => (
      <span key={line} className="flex items-center gap-1">
        {line}
        {menu && i === lines.length - 1 && <Caret />}
      </span>
    ))}
  </button>
);

const RibbonGroup: React.FC<{ title: string; className?: string; children: React.ReactNode }> = ({ title, className, children }) => (
  <section className={`${className} flex flex-col justify-between border-r border-[#e2e3e4] pt-1`}>
    <div className="flex items-start">{children}</div>
    <h2 className="text-center leading-4 text-[#555] pr-1">{title}</h2>
  </section>
);

const SectionHeading: React.FC<{ title: string; className?: string }> = ({ title, className }) => (
  <div className={`${className} flex items-center h-5 gap-1 pl-[9px] pr-2`}>
    <Chevron dir="down" thin className="w-3 h-3 text-[#666]" />
    <h2 className="text-[14px] leading-5 text-[#28356f] whitespace-nowrap">{title}</h2>
    <div className="flex-1 h-px bg-[#e2e2e2] ml-1" />
  </div>
);

const Tile: React.FC<{ name: string; icon: IconType }> = ({ name, icon: Icon }) => (
  <li className="flex h-[52px] w-[250px]">
    <Icon className="w-12 h-12 ml-1 mt-[2px]" />
    <span className="ml-[5px] mt-[9px] leading-4">{name}</span>
  </li>
);

const ScrollBar: React.FC<{ className?: string; before: number; thumb: number; after: number }> = ({ className, before, thumb, after }) => (
  <div className={`${className ?? ''} w-[15px] shrink-0 flex flex-col bg-[#f0f0f0] text-[#555]`}>
    <button aria-label="Scroll up" className="h-[17px] flex items-center justify-center">
      <Chevron dir="up" className="w-3 h-3" />
    </button>
    <div style={{ flexGrow: before }} />
    <div className="bg-[#cdcdcd]" style={{ flexGrow: thumb }} />
    <div style={{ flexGrow: after }} />
    <button aria-label="Scroll down" className="h-[17px] flex items-center justify-center">
      <Chevron dir="down" className="w-3 h-3" />
    </button>
  </div>
);

const Desktop = () => (
  <div className="flex pt-2">
    {desktopColumns.map((column, i) => (
      <ul key={i} className="w-[78px]">
        {column.map(({ name, icon: Icon }) => (
          <li key={name} className="h-[99px] flex flex-col items-center">
            <Icon className="w-12 h-12" />
            <span className="mt-[2px] w-[74px] text-center leading-[15px] text-white [text-shadow:1px_1px_2px_#000,0_1px_3px_#000]">
              {name}
            </span>
          </li>
        ))}
      </ul>
    ))}
  </div>
);

const TitleBar = () => (
  <header className="h-[31px] shrink-0 flex items-center pl-2 pr-px">
    <PcSmall className="w-4 h-4" />
    <div className="w-px h-3 bg-[#999] ml-[7px]" />
    <button aria-label="Properties" className="ml-2"><CheckSheet className="w-[18px] h-[18px]" /></button>
    <button aria-label="New folder" className="ml-1">
      <svg viewBox="0 0 16 16" className="w-[18px] h-4"><path d="M3 1h10v6l1 8H3z" fill="#dce2ee" stroke="#cad2e0" strokeWidth="1" /></svg>
    </button>
    <button aria-label="Customize" className="ml-[5px]">
      <svg viewBox="0 0 8 8" className="w-2 h-2"><path d="M1 1.500h6M1 4h6L4 7z" fill="#222" stroke="#222" strokeWidth="1" /></svg>
    </button>
    <div className="w-px h-3 bg-[#999] ml-[7px]" />
    <h1 className="ml-2 flex-1 leading-4">This PC</h1>
    <button aria-label="Minimize" className="w-[45px] h-full flex items-center justify-center">
      <svg viewBox="0 0 10 10" className="w-[10px] h-[10px]"><path d="M0 5.500h10" stroke="#000" strokeWidth="1" /></svg>
    </button>
    <button aria-label="Maximize" className="w-[46px] h-full flex items-center justify-center">
      <svg viewBox="0 0 10 10" className="w-[10px] h-[10px]"><path d="M0.500 0.500h9v9h-9z" fill="none" stroke="#000" strokeWidth="1" /></svg>
    </button>
    <button aria-label="Close" className="w-[46px] h-full flex items-center justify-center">
      <svg viewBox="0 0 10 10" className="w-[10px] h-[10px]"><path d="M0 0l10 10M10 0L0 10" stroke="#000" strokeWidth="1.100" /></svg>
    </button>
  </header>
);

const Ribbon = () => (
  <div className="shrink-0 text-[11px] text-[#333]">
    <nav className="h-6 flex items-stretch border-b border-[#dadbdc]">
      <button className="w-14 bg-[#0063b1] text-white">File</button>
      <button className="w-[79px] -mb-px bg-[#f5f6f7] border border-b-0 border-[#dadbdc]">Computer</button>
      <button className="w-14">View</button>
      <div className="flex-1" />
      <button aria-label="Collapse ribbon" className="w-6 flex items-center justify-center text-[#999]">
        <Chevron dir="up" className="w-3 h-3" />
      </button>
      <button aria-label="Help" className="self-center mr-1 ml-[2px] w-4 h-4 rounded-full bg-[#0d63b0] text-white font-bold text-[12px] leading-4">?</button>
    </nav>
    <div className="h-[92px] flex bg-[#f5f6f7] border-b border-[#dadbdc]">
      <RibbonGroup title="Location" className="w-[159px] pl-1">
        <RibbonButton icon={CheckSheet} lines={['Properties']} className="w-[59px]" />
        <RibbonButton icon={OpenSheet} lines={['Open']} className="w-[41px]" disabled />
        <RibbonButton icon={Rename} lines={['Rename']} className="w-[47px]" disabled />
      </RibbonGroup>
      <RibbonGroup title="Network" className="w-[209px] pl-[2px]">
        <RibbonButton icon={AccessMedia} lines={['Access', 'media']} className="w-[44px]" menu />
        <RibbonButton icon={MapDrive} lines={['Map network', 'drive']} className="w-[75px]" menu />
        <RibbonButton icon={AddLocation} lines={['Add a network', 'location']} className="w-[81px]" />
      </RibbonGroup>
      <RibbonGroup title="System" className="w-[241px] pl-1">
        <RibbonButton icon={Settings} lines={['Open', 'Settings']} className="w-12" />
        <div className="flex flex-col ml-1">
          {[
            { label: 'Uninstall or change a program', icon: Uninstall },
            { label: 'System properties', icon: SystemProps },
            { label: 'Manage', icon: Manage },
          ].map(({ label, icon: Icon }) => (
            <button key={label} className="h-[22px] flex items-center gap-[3px] whitespace-nowrap leading-4">
              <Icon className="w-4 h-4" />
              {label}
            </button>
          ))}
        </div>
      </RibbonGroup>
    </div>
  </div>
);

const AddressRow = () => (
  <div className="h-10 shrink-0 flex items-center pr-[13px]">
    <div className="w-[106px] flex items-center pl-3 text-[#555]">
      <button aria-label="Back"><LongArrow d="M13 7H2M6 2L1.500 7 6 12" className="w-[14px] h-[14px]" /></button>
      <button aria-label="Forward" className="ml-4 text-[#d0d0d0]"><LongArrow d="M1 7h11M8 2l4.500 5L8 12" className="w-[14px] h-[14px]" /></button>
      <button aria-label="Recent" className="ml-3"><Chevron dir="down" className="w-2 h-2" /></button>
      <button aria-label="Up" className="ml-[10px]"><LongArrow d="M7 13V2M2 6.500L7 1.500l5 5" className="w-[14px] h-[14px]" /></button>
    </div>
    <div className="flex-1 h-[30px] flex items-center border border-[#d9d9d9] text-[#555]">
      <PcSmall className="w-4 h-4 ml-[2px]" />
      <Chevron dir="right" className="w-2 h-2 ml-[5px]" />
      <button className="ml-2 leading-4 text-[#1a1a1a]">This PC</button>
      <Chevron dir="right" className="w-2 h-2 ml-[7px]" />
      <div className="flex-1" />
      <button aria-label="Previous locations" className="w-7 flex justify-center"><Chevron dir="down" className="w-3 h-3" /></button>
      <button aria-label="Refresh" className="w-[30px] h-full border-l border-[#d9d9d9] flex items-center justify-center">
        <svg viewBox="0 0 14 14" className="w-[14px] h-[14px]">
          <path d="M10.200 4.500A4.200 4.200 0 1 1 7 3.300h3" fill="none" stroke="#555" strokeWidth="1.300" />
          <path d="M10.500 1v3.500H7" fill="none" stroke="#555" strokeWidth="1.300" />
        </svg>
      </button>
    </div>
    <label className="ml-3 w-[342px] h-[30px] flex items-center border border-[#d9d9d9] pl-[14px]">
      <Magnifier className="w-[14px] h-[14px] text-[#777] mr-3" />
      <input aria-label="Search This PC" placeholder="Search This PC" className="flex-1 outline-none placeholder:text-[#6d6d6d]" />
    </label>
  </div>
);

const Tree = () => (
  <div className="w-[156px] flex shrink-0">
    <ul className="w-[139px] flex flex-col gap-2 overflow-hidden">
      {treeGroups.map((group, i) => (
        <li key={i}>
          <ul>
            {group.map(({ name, icon: Icon, root, active, pinned }) => (
              <li
                key={name}
                className={`h-6 flex items-center gap-[5px] whitespace-nowrap ${root ? 'pl-6' : 'pl-8'} ${active ? 'bg-[#d9d9d9]' : ''}`}
              >
                <Icon className="w-4 h-4 shrink-0" />
                {name}
                {pinned && (
                  <svg viewBox="0 0 12 12" className="w-3 h-3 ml-1">
                    <path d="M7 1l4 4-2 1-2 3-4-4 3-2zM4 7L1 11" fill="#888" stroke="#888" strokeWidth="1" />
                  </svg>
                )}
              </li>
            ))}
          </ul>
        </li>
      ))}
    </ul>
    <ScrollBar className="ml-px" before={73} thumb={261} after={10} />
  </div>
);

const Cursor = () => (
  <svg viewBox="0 0 12 19" className="absolute left-[35px] top-[25px] w-3 h-[19px] drop-shadow">
    <path d="M0.500 0.500v15l3.500-3 2.500 5.500 2.500-1-2.500-5.500h5z" fill="#fff" stroke="#000" strokeWidth="1" />
  </svg>
);

const Content = () => (
  <div className="flex-1 overflow-hidden">
    <SectionHeading title="Folders (7)" className="-mt-2" />
    <ul className="mt-[6px] ml-[18px] grid grid-cols-[250px_250px] gap-1">
      {folders.map(folder => <Tile key={folder.name} {...folder} />)}
    </ul>
    <SectionHeading title="Devices and drives (3)" className="mt-[5px]" />
    <ul className="mt-[6px] ml-[18px] grid grid-cols-[250px_250px] gap-1">
      <li className="relative flex h-[52px] w-[250px] bg-[#cce8ff] border border-[#99d1ff]">
        <LocalDisk className="w-12 h-12 ml-[3px] mt-px" />
        <div className="flex-1 ml-[5px] mr-1">
          <div className="leading-4 mt-px">Local Disk (C:)</div>
          <div className="h-[14px] mt-px bg-[#e6e6e6] border border-[#bcbcbc]">
            <div className="h-full bg-[#26a0da]" style={{ width: `${((drive.total - drive.free) / drive.total) * 100}%` }} />
          </div>
          <div className="leading-4 text-[#5f7488]">{drive.free} GB free of {drive.total} GB</div>
        </div>
        <Cursor />
      </li>
      <Tile name="CD Drive (D:)" icon={CdDrive} />
      <Tile name="CD Drive (E:)" icon={CdDrive} />
    </ul>
  </div>
);

const ExplorerWindow = () => (
  <main className="absolute left-[155px] top-[100px] right-[83px] bottom-[35px] flex flex-col bg-white border-l border-b border-[#a9e2ff] shadow-[0_4px_14px_rgba(0,0,0,0.4)]">
    <TitleBar />
    <Ribbon />
    <AddressRow />
    <div className="h-[2px] shrink-0" />
    <div className="flex-1 min-h-0 flex pr-[2px]">
      <Tree />
      <Content />
      <ScrollBar before={20} thumb={325} after={0} />
    </div>
    <footer className="h-6 shrink-0 flex items-center pl-[14px] pr-2 text-[11px] text-[#1e3a5f]">
      <span>10 items</span>
      <span className="ml-5 flex-1">1 item selected</span>
      <button aria-label="Details"><ThumbsView className="w-4 h-3" /></button>
      <button aria-label="Large icons" className="ml-[6px]"><PhotoSmall className="w-4 h-4" /></button>
    </footer>
  </main>
);

const TaskbarButton: React.FC<{ label: string; icon: React.ReactNode; className?: string }> = ({ label, icon, className }) => (
  <button aria-label={label} className={`h-[38px] w-[46px] flex items-center justify-center rounded-sm ${className ?? ''}`}>
    {icon}
  </button>
);

const StartOrb = () => (
  <svg viewBox="0 0 36 36" className="w-9 h-9">
    <circle cx="18" cy="18" r="17.500" fill="url(#orb)" stroke="#17384f" strokeWidth="1" />
    <path d="M2 15C5 2 31 2 34 15 25 12 11 13 2 15z" fill="#dcebf5" opacity="0.45" />
    <path d="M11 10c3-2 5-1 7 0l-2 7c-2-1-4-2-7 0z" fill="#f0642c" />
    <path d="M20 11c3 1 5 1 8-1l-2 8c-3 1-5 1-8-1z" fill="#8cc83c" />
    <path d="M9 18c3-1 5-1 7 0l-2 7c-2-1-4-1-7 0z" fill="#4fb0ee" />
    <path d="M17 19c3 1 5 2 8 0l-2 7c-3 2-5 1-8 0z" fill="#fdd13a" />
  </svg>
);

const ExplorerIcon = () => (
  <svg viewBox="0 0 24 24" className="w-6 h-6">
    <path d="M0 2h9l2 2h12v17H0z" fill="#e8a92e" />
    <path d="M1 6h22v15H1z" fill="#fbdc82" />
    <path d="M5 12h14v10h-4v-5H9v5H5z" fill="#4a95c8" />
  </svg>
);

const Taskbar = () => (
  <footer className="h-10 shrink-0 flex items-center text-white border-t border-[#8fa8b8] bg-linear-to-r from-[#1c3340] to-[#18202f]">
    <button aria-label="Start" className="w-[54px] mr-px flex justify-center"><StartOrb /></button>
    <button aria-label="Search" className="w-12 flex justify-center"><Magnifier className="w-[18px] h-[18px]" /></button>
    <div className="flex gap-[3px] ml-[3px]">
      <TaskbarButton label="Google Chrome" icon={<ChromeSmall className="w-6 h-6" />} />
      <TaskbarButton
        label="File Explorer"
        icon={<ExplorerIcon />}
        className="border border-[#dfe5e8] bg-linear-to-br from-[#8e979b] via-[#b9bfc2] to-[#8f989c]"
      />
      <TaskbarButton label="Thunderbird" icon={<ThunderbirdSmall className="w-6 h-6" />} />
      <TaskbarButton
        label="Spotify"
        icon={<SpotifySmall className="w-6 h-6" />}
        className="border border-[#8d989d] bg-linear-to-br from-[#9fa8ac] via-[#4b5a62] to-[#35464f]"
      />
      <TaskbarButton
        label="Discord"
        icon={<DiscordSmall className="w-6 h-6" />}
        className="border border-[#e8cf8c] bg-linear-to-b from-[#d9a81e] to-[#b8641c]"
      />
    </div>
    <div className="flex-1" />
    <div className="flex items-center gap-2">
      <button aria-label="Hidden icons">
        <svg viewBox="0 0 8 4" className="w-2 h-1"><path d="M0 4l4-4 4 4z" fill="#fff" /></svg>
      </button>
      <svg viewBox="0 0 16 16" className="w-4 h-4 ml-1">
        <path d="M3.500 4.500h7v7h-7zM10.500 7l3-2v6l-3-2M4 2c2-2 5-2 7 0M4 14c2 2 5 2 7 0" fill="none" stroke="#fff" strokeWidth="1.200" />
      </svg>
      <svg viewBox="0 0 16 16" className="w-4 h-4">
        <path d="M4 3.500h11.500v8H4M1 1.500h4v4H1zM3 6v8M6 14.500h7M9.500 12v2" fill="none" stroke="#fff" strokeWidth="1.100" />
      </svg>
      <svg viewBox="0 0 16 16" className="w-4 h-4">
        <path d="M0.500 5.500h3l4-4v12l-4-4h-3z" fill="none" stroke="#fff" strokeWidth="1.100" />
        <circle cx="11.500" cy="11" r="4.500" fill="#d8262c" />
        <path d="M9.500 9l4 4M13.500 9l-4 4" stroke="#fff" strokeWidth="1.200" />
      </svg>
      <span className="ml-[3px]">ENG</span>
    </div>
    <time className="ml-[10px] w-[54px] flex flex-col items-center leading-[18px] whitespace-nowrap">
      <span>2:09 PM</span>
      <span>12/7/2023</span>
    </time>
    <button aria-label="Notifications" className="relative ml-4 mr-[14px] w-6 h-6">
      <svg viewBox="0 0 24 24" className="w-6 h-6">
        <path d="M1 4h16v13H8l-3 3v-3H1z" fill="#fff" />
        <path d="M4 7.500h10M4 10.500h10M4 13.500h7" stroke="#1b2431" strokeWidth="1.300" />
      </svg>
      <span className="absolute left-2 top-[10px] w-4 h-4 rounded-full border border-[#8c9196] bg-[#3b4148] text-[11px] leading-[14px] text-center">4</span>
    </button>
    <button aria-label="Show desktop" className="w-[14px] h-full border border-[#6b7684] bg-linear-to-b from-[#0d121b] to-[#2a3342]" />
  </footer>
);

const App: React.FC = () => {
  return (
    <div className="h-screen flex flex-col overflow-hidden font-['Open_Sans','Noto_Sans',sans-serif] text-[12px] text-[#111] bg-[#00a2f5]">
      <Gradients />
      <div className="relative flex-1 min-h-0 bg-[radial-gradient(ellipse_95%_160%_at_5%_65%,#00b3ff_0%,#00a8fb_25%,#0092ee_42%,#0560cf_70%,#0640b3_100%)]">
        <Desktop />
        <ExplorerWindow />
      </div>
      <Taskbar />
    </div>
  );
};

export default App;
